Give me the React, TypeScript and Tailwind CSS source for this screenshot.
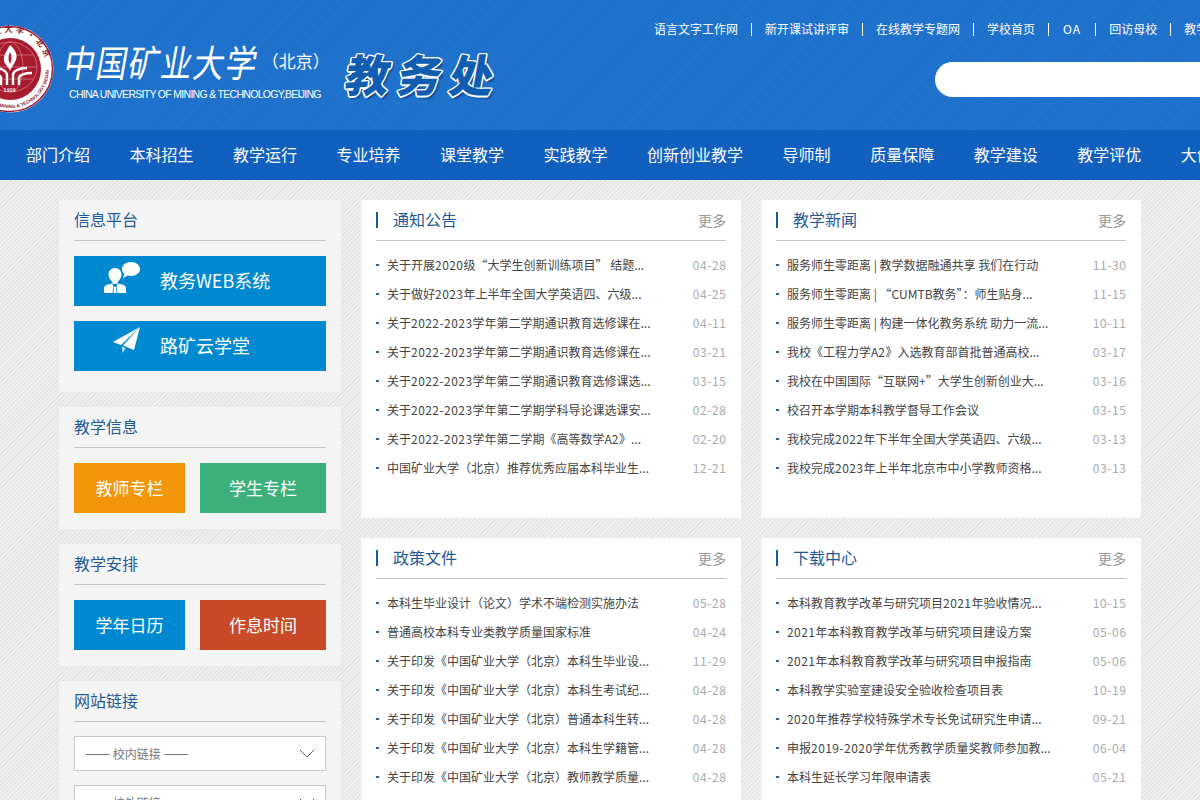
const cjk = "font-['Noto_Sans_CJK_SC','Liberation_Sans',sans-serif]";

const topLinks = ["语言文字工作网", "新开课试讲评审", "在线教学专题网", "学校首页", "OA", "回访母校", "教学督导"];
const navItems = ["部门介绍", "本科招生", "教学运行", "专业培养", "课堂教学", "实践教学", "创新创业教学", "导师制", "质量保障", "教学建设", "教学评优", "大创"];

const panels = [
  {
    title: "通知公告",
    rows: [
      ["关于开展2020级“大学生创新训练项目” 结题...", "04-28"],
      ["关于做好2023年上半年全国大学英语四、六级...", "04-25"],
      ["关于2022-2023学年第二学期通识教育选修课在...", "04-11"],
      ["关于2022-2023学年第二学期通识教育选修课在...", "03-21"],
      ["关于2022-2023学年第二学期通识教育选修课选...", "03-15"],
      ["关于2022-2023学年第二学期学科导论课选课安...", "02-28"],
      ["关于2022-2023学年第二学期《高等数学A2》...", "02-20"],
      ["中国矿业大学（北京）推荐优秀应届本科毕业生...", "12-21"],
    ],
  },
  {
    title: "教学新闻",
    rows: [
      ["服务师生零距离 | 教学数据融通共享 我们在行动", "11-30"],
      ["服务师生零距离 | “CUMTB教务”：师生贴身...", "11-15"],
      ["服务师生零距离 | 构建一体化教务系统 助力一流...", "10-11"],
      ["我校《工程力学A2》入选教育部首批普通高校...", "03-17"],
      ["我校在中国国际“互联网+”大学生创新创业大...", "03-16"],
      ["校召开本学期本科教学督导工作会议", "03-15"],
      ["我校完成2022年下半年全国大学英语四、六级...", "03-13"],
      ["我校完成2023年上半年北京市中小学教师资格...", "03-13"],
    ],
  },
  {
    title: "政策文件",
    rows: [
      ["本科生毕业设计（论文）学术不端检测实施办法", "05-28"],
      ["普通高校本科专业类教学质量国家标准", "04-24"],
      ["关于印发《中国矿业大学（北京）本科生毕业设...", "11-29"],
      ["关于印发《中国矿业大学（北京）本科生考试纪...", "04-28"],
      ["关于印发《中国矿业大学（北京）普通本科生转...", "04-28"],
      ["关于印发《中国矿业大学（北京）本科生学籍管...", "04-28"],
      ["关于印发《中国矿业大学（北京）教师教学质量...", "04-28"],
    ],
  },
  {
    title: "下载中心",
    rows: [
      ["本科教育教学改革与研究项目2021年验收情况...", "10-15"],
      ["2021年本科教育教学改革与研究项目建设方案", "05-06"],
      ["2021年本科教育教学改革与研究项目申报指南", "05-06"],
      ["本科教学实验室建设安全验收检查项目表", "10-19"],
      ["2020年推荐学校特殊学术专长免试研究生申请...", "09-21"],
      ["申报2019-2020学年优秀教学质量奖教师参加教...", "06-04"],
      ["本科生延长学习年限申请表", "05-21"],
    ],
  },
];

function Seal() {
  return (
    <svg width="88" height="88" viewBox="0 0 88 88" className="-ml-[34px] mt-[25px] shrink-0">
      <defs>
        <path id="sealTop" d="M 7 44 A 37 37 0 0 1 81 44" />
        <path id="sealBottom" d="M 5 44 A 39 39 0 0 0 83 44" />
      </defs>
      <circle cx="44" cy="44" r="43.5" fill="#fff" />
      <circle cx="44" cy="44" r="42.5" fill="none" stroke="#a31d33" strokeWidth="1.5" />
      <circle cx="44" cy="44" r="31" fill="#a81c30" />
      <text fontSize="8" fontWeight="700" fill="#8f1a2c" fontFamily="Noto Sans CJK SC">
        <textPath href="#sealTop" startOffset="50%" textAnchor="middle" letterSpacing="3">中国矿业大学·北京</textPath>
      </text>
      <text fontSize="4.6" fontWeight="700" fill="#8f1a2c" fontFamily="Liberation Sans">
        <textPath href="#sealBottom" startOffset="50%" textAnchor="middle">CHINA UNIVERSITY OF MINING &amp; TECHNOLOGY BEIJING</textPath>
      </text>
      <g fill="none" stroke="#d9717d" strokeWidth="0.8">
        <ellipse cx="44" cy="42" rx="27" ry="25" />
        <ellipse cx="44" cy="42" rx="13" ry="25" />
        <path d="M17 42h54M21 30h46M21 54h46" />
      </g>
      <path d="M44 20c7 6 8 12 5 17-1 3-4 5-5 9-1-4-5-6-6-10-1-5 3-11 6-16z" fill="#fff" />
      <path d="M44 27c2 4 2 8 0 12-2-4-2-8 0-12z" fill="#a81c30" />
      <g fill="none" stroke="#fff" strokeWidth="2.4">
        <path d="M41 60V50c0-4-6-7-14-7" />
        <path d="M47 60V50c0-4 6-7 14-7" />
        <path d="M35 60V53c0-3-6-5-13-5" />
        <path d="M53 60V53c0-3 6-5 13-5" />
      </g>
      <text x="44" y="67" textAnchor="middle" fontSize="4.5" fontWeight="700" fill="#fff" fontFamily="Liberation Sans" letterSpacing="0.6">1909</text>
    </svg>
  );
}

function PeopleIcon() {
  return (
    <svg width="36" height="31" viewBox="0 0 36 31" className="mb-[8px] shrink-0">
      <path d="M27 0c5 0 9 3 9 7s-4 7-9 7c-1 0-2 0-3-.4L19 16l1.400-4.300C19 10.500 18 9 18 7c0-4 4-7 9-7z" fill="#fff" />
      <path d="M11 6c4 0 6.500 3 6.500 6.500 0 3-2 6-4 7.500v2h-5v-2c-2-1.500-4-4.500-4-7.500C4.500 9 7 6 11 6z" fill="#fff" />
      <path d="M0 31v-4c0-3 1.500-4 4-4.500l4-1 1.500 3-1 6.500zM22 31v-4c0-3-1.500-4-4-4.500l-4-1-1.500 3 1 6.500zM10 25h2l.5 6h-3z" fill="#fff" />
    </svg>
  );
}

function PlaneIcon() {
  return (
    <svg width="28" height="26" viewBox="0 0 28 26" className="mb-[12px] shrink-0">
      <path d="M27 0 0 15l8 3z" fill="#fff" />
      <path d="M27 0 10 18.500 21 23z" fill="#fff" />
      <path d="M9 19.500l.5 6.500 3-4.800z" fill="#cfe9f7" />
    </svg>
  );
}

function SideTitle({ children }: { children: string }) {
  return <div className="h-[41px] border-b border-[#c6c6c6] text-[16px] leading-[39px] text-[#1f5a96]">{children}</div>;
}

function Tile({ label, className }: { label: string; className: string }) {
  return <div className={"flex h-[50px] items-center justify-center text-[17px] text-white " + className}>{label}</div>;
}

function LinkSelect({ label }: { label: string }) {
  return (
    <div className="flex h-[35px] items-center justify-between border border-[#c8c8c8] bg-white pl-[10px] pr-[10px] text-[12px] text-[#777]">
      <span>
        <span className="text-[15px]">——</span> {label} <span className="text-[15px]">——</span>
      </span>
      <svg width="16" height="9" viewBox="0 0 16 9" fill="none" stroke="#666" strokeWidth="1">
        <path d="M1 1l7 7 7-7" />
      </svg>
    </div>
  );
}

// digits sit a little wider in the original font
function RowText({ text }: { text: string }) {
  return (
    <>
      {text.split(/(\d[\d-]*)/).map((part, i) =>
        i % 2 === 1 ? (
          <span key={i} className="tracking-[0.45px]">{part}</span>
        ) : (
          part
        ),
      )}
    </>
  );
}

function NewsPanel({ title, rows }: { title: string; rows: string[][] }) {
  return (
    <section className="h-[318px] bg-white px-[15px]">
      <div className="flex h-[41px] items-center justify-between border-b border-[#c6c6c6]">
        <div className="flex items-center">
          <span className="h-4 w-[2px] bg-[#1a5a9e]" />
          <span className="mb-[2px] ml-[15px] text-[16px] text-[#1f5a96]">{title}</span>
        </div>
        <span className="text-[14px] text-[#999]">更多</span>
      </div>
      <ul className="mt-[9px]">
        {rows.map(([text, date], i) => (
          <li key={i} className="flex h-[29px] items-center text-[12px]">
            <span className="h-[2px] w-[3px] shrink-0 bg-[#2a6496]" />
            <span className="ml-2 flex-1 truncate text-[#444]">
              <RowText text={text} />
            </span>
            <span className="-mr-[0.6px] ml-2 shrink-0 tracking-[0.6px] text-[#aaa]">{date}</span>
          </li>
        ))}
      </ul>
    </section>
  );
}

export default function App() {
  return (
    <div className={"h-[800px] w-[1200px] overflow-hidden bg-[repeating-linear-gradient(135deg,#e4e4e4_0px,#e4e4e4_1.500px,#f0f0f0_1.500px,#f0f0f0_3px)] " + cjk}>
      <header className="flex h-[130px] bg-[repeating-linear-gradient(135deg,#1b6dc7_0px,#1b6dc7_1px,#2275cf_1px,#2275cf_2.500px)]">
        <Seal />
        <div className="ml-[11px] mt-[38px] w-[265px] shrink-0 text-white">
          <div className="flex items-center">
            <span className="whitespace-nowrap text-[31px] leading-[46px] tracking-[1.300px] [transform:skewX(-10deg)_scaleY(1.2)]">中国矿业大学</span>
            <span className="ml-[3px] whitespace-nowrap text-[17px] leading-[46px]">（北京）</span>
          </div>
          <div className="ml-[4px] mt-[4px] whitespace-nowrap font-['Liberation_Sans',sans-serif] text-[10.5px] leading-[12px] tracking-[-0.7px]">CHINA UNIVERSITY OF MINING &amp; TECHNOLOGY,BEIJING</div>
        </div>
        <div className="ml-[14px] mt-[46px] w-[163px] shrink-0 -skew-x-[10deg] whitespace-nowrap text-[44px] font-black leading-[54px] tracking-[8px] text-[#0f5cb0] [text-shadow:1.500px_0_0_#fff,-1.500px_0_0_#fff,0_1.500px_0_#fff,0_-1.500px_0_#fff,1px_1px_0_#fff,-1px_1px_0_#fff,1px_-1px_0_#fff,-1px_-1px_0_#fff,2.500px_2.500px_2px_rgba(0,30,80,0.5)]">
          教务处
        </div>
        <div className="ml-[147px] shrink-0">
          <nav className="mt-[20px] flex h-[18px] items-center whitespace-nowrap text-[12px] text-white">
            {topLinks.map((link, i) => (
              <span key={link} className="flex items-center">
                {i > 0 && <span className="mx-[13px] h-[13px] w-px bg-white" />}
                <span className={link === "OA" ? "px-px tracking-[1px]" : ""}>{link}</span>
              </span>
            ))}
          </nav>
          <div className="ml-[281px] mt-[24px] h-[35px] w-[320px] rounded-l-[18px] bg-white" />
        </div>
      </header>

      <nav className="flex h-[50px] items-center gap-[39.500px] whitespace-nowrap bg-[#115fbe] pb-[2px] pl-[26px] text-[16px] text-white">
        {navItems.map((item) => (
          <span key={item} className="shrink-0">{item}</span>
        ))}
      </nav>

      <main className="mx-auto flex w-[1082px] gap-5 pt-5">
        <aside className="flex w-[282px] shrink-0 flex-col gap-[15px]">
          <section className="h-[192px] bg-[#f4f4f4] px-[15px]">
            <SideTitle>信息平台</SideTitle>
            <div className="mt-[15px] flex h-[50px] items-center bg-[#0089d0] pl-[30px] text-[18px] text-white">
              <PeopleIcon />
              <span className="mb-[2px] ml-5">教务WEB系统</span>
            </div>
            <div className="mt-[15px] flex h-[50px] items-center bg-[#0089d0] pl-[39px] text-[18px] text-white">
              <PlaneIcon />
              <span className="mb-[2px] ml-[19px]">路矿云学堂</span>
            </div>
          </section>

          <section className="h-[122px] bg-[#f4f4f4] px-[15px]">
            <SideTitle>教学信息</SideTitle>
            <div className="mt-[15px] flex gap-[15px]">
              <Tile label="教师专栏" className="w-[111px] bg-[#f39509]" />
              <Tile label="学生专栏" className="w-[126px] bg-[#3cb07b]" />
            </div>
          </section>

          <section className="h-[122px] bg-[#f4f4f4] px-[15px]">
            <SideTitle>教学安排</SideTitle>
            <div className="mt-[15px] flex gap-[15px]">
              <Tile label="学年日历" className="w-[111px] bg-[#0089d0]" />
              <Tile label="作息时间" className="w-[126px] bg-[#c94a26]" />
            </div>
          </section>

          <section className="bg-[#f4f4f4] px-[15px] pb-[15px]">
            <SideTitle>网站链接</SideTitle>
            <div className="mt-[14px] flex flex-col gap-[14px]">
              <LinkSelect label="校内链接" />
              <LinkSelect label="校外链接" />
            </div>
          </section>
        </aside>

        <div className="grid w-[780px] shrink-0 grid-cols-2 content-start gap-5">
          {panels.map((panel) => (
            <NewsPanel key={panel.title} title={panel.title} rows={panel.rows} />
          ))}
        </div>
      </main>
    </div>
  );
}
